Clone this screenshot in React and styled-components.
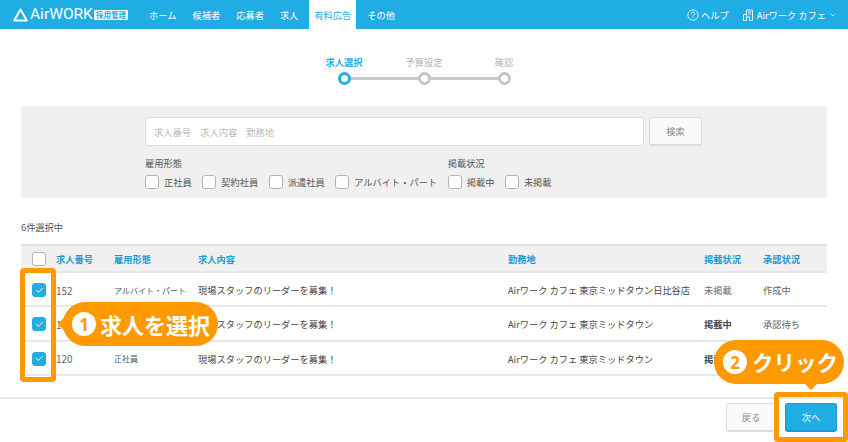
import React from 'react';
import styled, { createGlobalStyle } from 'styled-components';
import { Check, ChevronDown } from 'lucide-react';

const FONT = '"Noto Sans CJK JP", "Noto Sans", sans-serif';
const BLUE = '#20ade4';
const ORANGE = '#ff9900';
const TEXT = '9.24px';

const GlobalStyle = createGlobalStyle`
  html, body { margin: 0; padding: 0; background: #fff; }
  body { font-family: ${FONT}; color: #444; overflow: hidden; }
  * { box-sizing: border-box; }
`;

const Page = styled.div`
  position: relative;
  width: 848px;
  height: 442px;
  overflow: hidden;
  display: flex;
  flex-direction: column;
`;

const Header = styled.header`
  height: 29px;
  background: ${BLUE};
  display: flex;
  align-items: stretch;
  padding-left: 13px;
  color: #fff;
  flex: none;
`;

const Logo = styled.div`
  display: flex;
  align-items: center;
  width: 126px;
  flex: none;
`;

const LogoText = styled.span`
  font-family: Roboto, "Liberation Sans", sans-serif;
  font-weight: 400;
  font-size: 15.5px;
  margin-left: 2px;
  width: 62px;
  line-height: 1;
`;

const LogoBadge = styled.span`
  background: #fff;
  color: ${BLUE};
  font-size: 7.5px;
  font-weight: 700;
  line-height: 10px;
  height: 10px;
  width: 34px;
  text-align: center;
  margin-left: 2px;
  border-radius: 1px;
`;

const Nav = styled.nav`
  display: flex;
  align-items: stretch;
  margin-left: 2px;
`;

const NavItem = styled.a`
  display: flex;
  align-items: center;
  justify-content: center;
  font-size: ${TEXT};
  padding: 0 ${({ $pad }) => $pad}px;
  margin-left: ${({ $active }) => ($active ? 3 : 0)}px;
  color: ${({ $active }) => ($active ? BLUE : '#fff')};
  background: ${({ $active }) => ($active ? '#fff' : 'transparent')};
  white-space: nowrap;
`;

const HeaderRight = styled.div`
  margin-left: auto;
  display: flex;
  align-items: center;
  padding-right: 11px;
  font-size: ${TEXT};
  white-space: nowrap;
`;

const HelpItem = styled.span`
  display: flex;
  align-items: center;
  gap: 2px;
  margin-right: 14px;
`;

const ShopItem = styled.span`
  display: flex;
  align-items: center;
  gap: 3px;
`;

const Stepper = styled.div`
  height: 77px;
  flex: none;
  display: flex;
  justify-content: center;
  padding-top: 28px;
`;

const Step = styled.div`
  position: relative;
  width: 80px;
  display: flex;
  flex-direction: column;
  align-items: center;
  color: ${({ $active }) => ($active ? BLUE : '#b4b4b4')};
  font-size: ${TEXT};
  font-weight: ${({ $active }) => ($active ? 700 : 400)};
  line-height: 11px;
`;

const StepDot = styled.span`
  width: 13px;
  height: 13px;
  margin-top: 4px;
  border-radius: 50%;
  background: #fff;
  border: 3px solid ${({ $active }) => ($active ? BLUE : '#c4c4c4')};
  position: relative;
  z-index: 1;
`;

const StepLine = styled.span`
  position: absolute;
  left: 40px;
  width: 80px;
  top: 20px;
  height: 3px;
  background: #c8c8c8;
`;

const Filter = styled.section`
  margin: 0 21px;
  height: 92px;
  background: #f0f0f0;
  border-radius: 3px;
  padding: 11px 0 0 124px;
  flex: none;
`;

const SearchRow = styled.div`
  display: flex;
  gap: 5px;
`;

const SearchInput = styled.div`
  width: 499px;
  height: 29px;
  background: #fff;
  border: 1px solid #dcdcdc;
  border-radius: 3px;
  padding-left: 8px;
  display: flex;
  align-items: center;
  font-size: ${TEXT};
  color: #bbb;
  white-space: pre;
`;

const Button = styled.button`
  font-family: ${FONT};
  font-size: ${TEXT};
  color: ${({ $primary }) => ($primary ? '#fff' : '#888')};
  width: ${({ $width }) => $width}px;
  height: 29px;
  border-radius: 3px;
  background: ${({ $primary }) => ($primary ? BLUE : '#fafafa')};
  border: 1px solid ${({ $primary }) => ($primary ? '#1b9bcf' : '#dcdcdc')};
  border-bottom-width: 2px;
  padding: 0;
`;

const Groups = styled.div`
  display: flex;
  margin-top: 11px;
`;

const Group = styled.div`
  margin-right: 10.5px;
`;

const GroupLabel = styled.div`
  font-size: ${TEXT};
  line-height: 13px;
  color: #555;
  margin-bottom: 5px;
`;

const Options = styled.div`
  display: flex;
  gap: 10.5px;
`;

const Option = styled.label`
  display: flex;
  align-items: center;
  gap: 5px;
  font-size: ${TEXT};
  color: #555;
  white-space: nowrap;
`;

const Box = styled.span`
  width: 14px;
  height: 14px;
  flex: none;
  border-radius: 3px;
  display: flex;
  align-items: center;
  justify-content: center;
  background: ${({ $checked }) => ($checked ? BLUE : '#fff')};
  border: 1px solid ${({ $checked }) => ($checked ? BLUE : '#b4b4b4')};
  color: #fff;
`;

const Count = styled.div`
  margin: 22px 0 0 21px;
  font-size: ${TEXT};
  line-height: 14px;
  color: #555;
  flex: none;
`;

const Table = styled.div`
  margin: 10px 21px 0;
  flex: none;
`;

const Row = styled.div`
  display: grid;
  grid-template-columns: 35px 58px 84px 310px 196px 59px 64px;
  align-items: center;
  font-size: ${TEXT};
  height: ${({ $head }) => ($head ? 29 : 34.33)}px;
  padding-top: ${({ $head }) => ($head ? 0 : 2)}px;
  color: #444;
  background: ${({ $head }) => ($head ? '#f0f0f0' : '#fff')};
  border-top: ${({ $head }) => ($head ? '2px solid #e0e0e0' : 'none')};
  border-bottom: 2px solid #e8e8e8;
`;

const HeadCell = styled.span`
  color: #1a9ad0;
  font-weight: 700;
`;

const BoxCell = styled.span`
  padding-left: 11px;
`;

const NumCell = styled.span`
  font-size: 10px;
  color: #666;
`;

const SmallCell = styled.span`
  font-size: 8px;
  color: #555;
`;

const StatusCell = styled.span`
  font-weight: ${({ $bold }) => ($bold ? 700 : 400)};
  color: ${({ $bold }) => ($bold ? '#444' : '#666')};
`;

const Footer = styled.footer`
  margin-top: 21px;
  flex: 1;
  border-top: 2px solid #e8e8e8;
  padding: 4px 11px 0 0;
  display: flex;
  justify-content: flex-end;
  gap: 9px;
`;

const Frame = styled.div`
  position: absolute;
  border: 5px solid ${ORANGE};
  border-radius: 4px;
`;

const LeftFrame = styled(Frame)`
  left: 20px;
  top: 268px;
  width: 36px;
  height: 114px;
`;

const RightFrame = styled(Frame)`
  left: 774px;
  top: 392px;
  width: 74px;
  height: 50px;
`;

const Bubble = styled.div`
  position: absolute;
  height: 44px;
  background: ${ORANGE};
  border-radius: 22px;
  display: flex;
  align-items: center;
  color: #fff;
  font-size: ${({ $size }) => $size}px;
  font-weight: 700;
  line-height: 1;
  white-space: nowrap;
  padding-left: 9px;
`;

const SelectBubble = styled(Bubble)`
  left: 63px;
  top: 302px;
  width: 155px;
  &::before {
    content: '';
    position: absolute;
    left: -5px;
    top: 9px;
    border-style: solid;
    border-width: 13px 12px 13px 0;
    border-color: transparent ${ORANGE} transparent transparent;
  }
`;

const ClickBubble = styled(Bubble)`
  left: 714px;
  top: 340px;
  width: 130px;
  &::after {
    content: '';
    position: absolute;
    left: 90px;
    bottom: -6px;
    border-style: solid;
    border-width: 7px 7px 0 7px;
    border-color: ${ORANGE} transparent transparent transparent;
  }
`;

const BubbleNum = styled.span`
  width: 24px;
  height: 24px;
  flex: none;
  border-radius: 50%;
  background: #fff;
  color: ${ORANGE};
  font-family: "Open Sans", sans-serif;
  font-size: 17px;
  font-weight: 700;
  display: flex;
  align-items: center;
  justify-content: center;
  margin-right: ${({ $gap }) => $gap}px;
`;

const NAV = [
  ['ホーム', 8], ['候補者', 8], ['応募者', 8], ['求人', 8], ['有料広告', 5], ['その他', 11],
];
const STEPS = ['求人選択', '予算設定', '確認'];
const TYPES = ['正社員', '契約社員', '派遣社員', 'アルバイト・パート'];
const STATES = ['掲載中', '未掲載'];
const HEADS = ['求人番号', '雇用形態', '求人内容', '勤務地', '掲載状況', '承認状況'];
const JOBS = [
  { no: '152', type: 'アルバイト・パート', place: 'Airワーク カフェ 東京ミッドタウン日比谷店', status: '未掲載', approval: '作成中' },
  { no: '148', type: '契約社員', place: 'Airワーク カフェ 東京ミッドタウン', status: '掲載中', live: true, approval: '承認待ち' },
  { no: '120', type: '正社員', place: 'Airワーク カフェ 東京ミッドタウン', status: '掲載中', live: true, approval: '承認済み' },
];

const LogoMark = () => (
  <svg width="15" height="14" viewBox="0 0 15 14" fill="none" stroke="#fff" strokeWidth="2" strokeLinejoin="round">
    <path d="M7.5 1.5 L13.8 12.5 H1.2 Z" />
  </svg>
);

const ShopIcon = () => (
  <svg width="11" height="12" viewBox="0 0 11 12" fill="none" stroke="#fff" strokeWidth="0.9">
    <path d="M3.5 11.5V1h6v10.5H6.5V8h-3v3.5H.5V5.5h3M5 3h3M5 5h3" />
  </svg>
);

const HelpIcon = () => (
  <svg width="12" height="12" viewBox="0 0 12 12" fill="none" stroke="#fff" strokeWidth="0.8">
    <circle cx="6" cy="6" r="5.2" />
    <path d="M4.4 4.7c0-2.1 3.3-2.1 3.3 0 0 1.3-1.7 1.2-1.7 2.6M6 8.2v.9" />
  </svg>
);

export default function App() {
  return (
    <Page>
      <GlobalStyle />
      <Header>
        <Logo>
          <LogoMark />
          <LogoText>AirWORK</LogoText>
          <LogoBadge>採用管理</LogoBadge>
        </Logo>
        <Nav>
          {NAV.map(([label, pad]) => (
            <NavItem key={label} $pad={pad} $active={label === '有料広告'}>{label}</NavItem>
          ))}
        </Nav>
        <HeaderRight>
          <HelpItem><HelpIcon />ヘルプ</HelpItem>
          <ShopItem>
            <ShopIcon />
            Airワーク カフェ
            <ChevronDown size={8} strokeWidth={2} />
          </ShopItem>
        </HeaderRight>
      </Header>

      <Stepper>
        {STEPS.map((label, i) => (
          <Step key={label} $active={i === 0}>
            {label}
            {i < STEPS.length - 1 && <StepLine />}
            <StepDot $active={i === 0} />
          </Step>
        ))}
      </Stepper>

      <Filter>
        <SearchRow>
          <SearchInput>求人番号　求人内容　勤務地</SearchInput>
          <Button $width={53}>検索</Button>
        </SearchRow>
        <Groups>
          <Group>
            <GroupLabel>雇用形態</GroupLabel>
            <Options>
              {TYPES.map((t) => <Option key={t}><Box />{t}</Option>)}
            </Options>
          </Group>
          <Group>
            <GroupLabel>掲載状況</GroupLabel>
            <Options>
              {STATES.map((t) => <Option key={t}><Box />{t}</Option>)}
            </Options>
          </Group>
        </Groups>
      </Filter>

      <Count>6件選択中</Count>

      <Table>
        <Row $head>
          <BoxCell><Box /></BoxCell>
          {HEADS.map((h) => <HeadCell key={h}>{h}</HeadCell>)}
        </Row>
        {JOBS.map((job) => (
          <Row key={job.no}>
            <BoxCell><Box $checked><Check size={9} strokeWidth={2.5} /></Box></BoxCell>
            <NumCell>{job.no}</NumCell>
            <SmallCell>{job.type}</SmallCell>
            <span>現場スタッフのリーダーを募集！</span>
            <span>{job.place}</span>
            <StatusCell $bold={job.live}>{job.status}</StatusCell>
            <StatusCell>{job.approval}</StatusCell>
          </Row>
        ))}
      </Table>

      <Footer>
        <Button $width={50}>戻る</Button>
        <Button $width={52} $primary>次へ</Button>
      </Footer>

      <LeftFrame />
      <RightFrame />
      <SelectBubble $size={22}><BubbleNum $gap={4}>1</BubbleNum>求人を選択</SelectBubble>
      <ClickBubble $size={21.5}><BubbleNum $gap={5}>2</BubbleNum>クリック</ClickBubble>
    </Page>
  );
}
